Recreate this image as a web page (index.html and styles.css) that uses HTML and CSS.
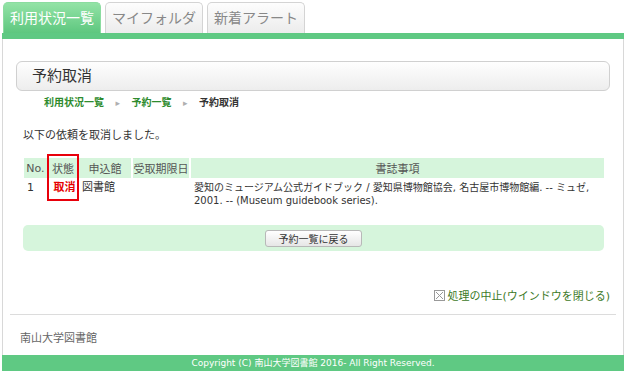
FILE: index.html
```html
<!DOCTYPE html>
<html lang="ja">

<head>
    <meta charset="UTF-8">
    <meta name="viewport" content="width=device-width, initial-scale=1.0">
    <title>予約取消</title>
    <link rel="stylesheet" href="styles.css">
</head>

<body>

    <div class="wrap">
        <div class="tabs">
            <a class="tab active">利用状況一覧</a>
            <a class="tab">マイフォルダ</a>
            <a class="tab">新着アラート</a>
        </div>
        <div class="tab-bar"></div>

        <div class="page">
            <div class="title-box">予約取消</div>

            <div class="breadcrumb">
                <a>利用状況一覧</a>
                <span class="sep">&#9656;</span>
                <a>予約一覧</a>
                <span class="sep">&#9656;</span>
                <span class="current">予約取消</span>
            </div>

            <p class="message">以下の依頼を取消しました。</p>

            <div class="table-area">
                <table class="result">
                    <tr>
                        <th class="c-no">No.</th>
                        <th class="c-state">状態</th>
                        <th class="c-lib">申込館</th>
                        <th class="c-date">受取期限日</th>
                        <th>書誌事項</th>
                    </tr>
                    <tr>
                        <td>1</td>
                        <td class="cancel">取消</td>
                        <td>図書館</td>
                        <td></td>
                        <td class="biblio">愛知のミュージアム公式ガイドブック / 愛知県博物館協会, 名古屋市博物館編. -- ミュゼ, 2001. -- (Museum guidebook series).</td>
                    </tr>
                </table>
                <div class="mark"></div>
            </div>

            <div class="action-box">
                <button>予約一覧に戻る</button>
            </div>

            <div class="close-line">
                <a class="close-link">
                    <svg class="close-icon" width="11" height="11" viewBox="0 0 11 11">
                        <rect x="0.5" y="0.5" width="10" height="10" fill="none" stroke="#999" />
                        <path d="M2 2 L9 9 M9 2 L2 9" stroke="#999" stroke-width="1" />
                    </svg>処理の中止(ウインドウを閉じる)</a>
            </div>

            <hr>

            <div class="library">南山大学図書館</div>
        </div>

        <div class="footer">Copyright (C) 南山大学図書館 2016- All Right Reserved.</div>
    </div>

</body>

</html>
```

FILE: styles.css
```css
* {
    padding: 0;
    margin: 0;
    box-sizing: border-box;
}

body {
    font-family: "DejaVu Sans", "Noto Sans CJK JP", sans-serif;
    color: #333;
    background: #fff;
}

.wrap {
    width: 622px;
    margin-left: 2px;
}

.tabs {
    display: flex;
    gap: 4px;
    height: 33px;
    padding-top: 2px;
    padding-left: 1px;
}

.tab {
    width: 98px;
    height: 31px;
    line-height: 30px;
    text-align: center;
    font-size: 14px;
    color: #888;
    border: 1px solid #d4d4d4;
    border-bottom: none;
    border-radius: 5px 5px 0 0;
    background: linear-gradient(#fdfdfd, #ececec);
}

.tab.active {
    color: #fff;
    border-color: #8bdca0;
    background: linear-gradient(#93e3a6, #5ec77f);
}

.tab-bar {
    height: 6px;
    background: #5fc983;
}

.page {
    border-left: 1px solid #d8d8d8;
    border-right: 1px solid #d8d8d8;
    padding: 22px 13px 0 13px;
    height: 316px;
}

.title-box {
    height: 30px;
    line-height: 29px;
    padding-left: 15px;
    font-size: 15px;
    color: #333;
    border: 1px solid #d0d0d0;
    border-radius: 6px;
    background: linear-gradient(#fefefe, #ededed);
}

.breadcrumb {
    margin-top: 5px;
    padding-left: 28px;
    font-size: 10px;
    font-weight: bold;
    height: 14px;
    line-height: 14px;
}

.breadcrumb a {
    color: #2e8b2e;
}

.breadcrumb .sep {
    color: #b0b0b0;
    font-size: 9px;
    font-weight: normal;
    margin: 0 8px;
}

.breadcrumb .current {
    color: #333;
}

.message {
    margin-top: 18px;
    padding-left: 7px;
    font-size: 11px;
    line-height: 16px;
}

.table-area {
    position: relative;
    margin-top: 14px;
    padding: 0 6px 0 8px;
}

.result {
    width: 100%;
    border-collapse: separate;
    border-spacing: 0;
    font-size: 11px;
}

.result th {
    background: #d6f5dc;
    color: #555;
    font-weight: normal;
    height: 20px;
    border-right: 2px solid #fff;
    text-align: center;
}

.result th:last-child {
    border-right: none;
}

.result td {
    vertical-align: top;
    padding: 3px 2px 0 3px;
    line-height: 13px;
    height: 30px;
}

.result td.biblio {
    font-size: 10px;
    padding-right: 0;
}

.c-no {
    width: 25px;
}

.c-state {
    width: 30px;
}

.c-lib {
    width: 54px;
}

.c-date {
    width: 58px;
}

.result td.cancel {
    color: #e60000;
    font-weight: bold;
    text-align: center;
}

.mark {
    position: absolute;
    left: 31px;
    top: -4px;
    width: 32px;
    height: 47px;
    border: 2px solid #e8000b;
}

.action-box {
    margin: 17px 6px 0 7px;
    height: 26px;
    background: #d6f5dc;
    border-radius: 5px;
    display: flex;
    align-items: center;
    justify-content: center;
}

.action-box button {
    font-family: inherit;
    width: 97px;
    height: 17px;
    font-size: 10px;
    color: #333;
    border: 1px solid #b8b8b8;
    border-radius: 3px;
    background: linear-gradient(#ffffff, #e6e6e6);
}

.close-line {
    margin-top: 38px;
    text-align: right;
    font-size: 11px;
    line-height: 16px;
}

.close-link {
    color: #3d7a28;
}

.close-icon {
    vertical-align: -1px;
    margin-right: 2px;
}

hr {
    border: none;
    border-top: 1px solid #dcdcdc;
    margin: 9px -6px 0 -6px;
}

.library {
    margin-top: 14px;
    padding-left: 4px;
    font-size: 11px;
    color: #666;
}

.footer {
    height: 16px;
    line-height: 16px;
    background: #5fc983;
    color: #fff;
    font-size: 9px;
    text-align: center;
}
```
